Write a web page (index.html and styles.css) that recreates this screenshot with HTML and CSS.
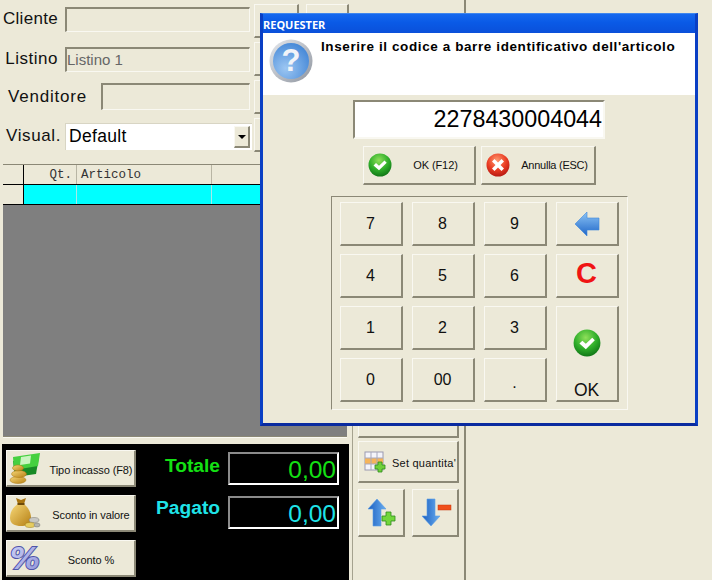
FILE: index.html
```html
<!DOCTYPE html>
<html lang="en">
<head>
    <meta charset="UTF-8">
    <title>Cassa</title>
    <link rel="stylesheet" href="styles.css">
</head>
<body>

    <!-- shared gradients and icons -->
    <svg class="defs" width="0" height="0" aria-hidden="true">
        <defs>
            <radialGradient id="gGreen" cx="45%" cy="30%" r="75%">
                <stop offset="0" stop-color="#8fe05a"/>
                <stop offset="0.55" stop-color="#2fae2a"/>
                <stop offset="1" stop-color="#0c6e14"/>
            </radialGradient>
            <radialGradient id="gRed" cx="45%" cy="30%" r="75%">
                <stop offset="0" stop-color="#ff9a70"/>
                <stop offset="0.55" stop-color="#ea3d24"/>
                <stop offset="1" stop-color="#b01410"/>
            </radialGradient>
            <radialGradient id="gHelp" cx="35%" cy="70%" r="85%">
                <stop offset="0" stop-color="#9cc6f2"/>
                <stop offset="1" stop-color="#3a80d4"/>
            </radialGradient>
            <linearGradient id="gRing" x1="0" y1="0" x2="1" y2="1">
                <stop offset="0" stop-color="#e6e9ee"/>
                <stop offset="1" stop-color="#8f959f"/>
            </linearGradient>
            <linearGradient id="gBlueH" x1="0" y1="0" x2="1" y2="0">
                <stop offset="0" stop-color="#1c5fc0"/>
                <stop offset="1" stop-color="#69aef0"/>
            </linearGradient>
            <linearGradient id="gBlueV" x1="0" y1="0" x2="0" y2="1">
                <stop offset="0" stop-color="#8cc4f5"/>
                <stop offset="1" stop-color="#1f66c8"/>
            </linearGradient>
            <linearGradient id="gGold" x1="0" y1="0" x2="1" y2="1">
                <stop offset="0" stop-color="#f7d878"/>
                <stop offset="1" stop-color="#b57f14"/>
            </linearGradient>
            <linearGradient id="gPercent" x1="0" y1="0" x2="1" y2="1">
                <stop offset="0" stop-color="#d0d3f6"/>
                <stop offset="1" stop-color="#8c92d8"/>
            </linearGradient>
            <symbol id="iconCheck" viewBox="0 0 24 24">
                <circle cx="12" cy="12" r="11.5" fill="url(#gGreen)"/>
                <path d="M5.5 12.5l2.5-2.4 3 2.6 5.500-5.200 2.200 2.200-7.700 7.600z" fill="#fff"/>
            </symbol>
        </defs>
    </svg>

    <div class="app">
        <div class="main">
            <div class="filters">
                <div class="fields">
                    <div class="row row--cliente">
                        <span class="row__label">Cliente</span>
                        <div class="field"></div>
                    </div>
                    <div class="row row--listino">
                        <span class="row__label row__label--listino">Listino</span>
                        <div class="field field--muted">Listino 1</div>
                    </div>
                    <div class="row row--venditore">
                        <span class="row__label row__label--wide">Venditore</span>
                        <div class="field"></div>
                    </div>
                    <div class="row row--visual">
                        <span class="row__label row__label--visual">Visual.</span>
                        <div class="combo">
                            <span class="combo__text">Default</span>
                            <span class="combo__arrow"></span>
                        </div>
                    </div>
                </div>
                <div class="quick">
                    <div class="btn"></div><div class="btn"></div>
                    <div class="btn"></div><div class="btn"></div>
                    <div class="btn"></div><div class="btn"></div>
                    <div class="btn"></div><div class="btn"></div>
                </div>
            </div>

            <div class="sheet">
                <div class="sheet__row sheet__row--head">
                    <div class="sheet__fixed"></div>
                    <div class="sheet__cell sheet__cell--qty">Qt.</div>
                    <div class="sheet__cell">Articolo</div>
                    <div class="sheet__cell"></div>
                </div>
                <div class="sheet__row sheet__row--current">
                    <div class="sheet__fixed"></div>
                    <div class="sheet__cell"></div>
                    <div class="sheet__cell"></div>
                    <div class="sheet__cell"></div>
                </div>
            </div>

            <div class="totals">
                <div class="totals__actions">
                    <div class="btn btn--action">
                        <svg class="icon-30" viewBox="0 0 30 30">
                            <path d="M3 8L29 4l-3 17-21 3z" fill="#178a26"/>
                            <path d="M3 4l27-4-2 13-24 4z" fill="#45d040"/>
                            <path d="M11 4l10-1.500-1 8-10 1.500z" fill="#c9f5c0"/>
                            <ellipse cx="8" cy="27" rx="8" ry="3.500" fill="url(#gGold)" stroke="#a87610" stroke-width=".5"/>
                            <ellipse cx="9" cy="21" rx="7.500" ry="3.500" fill="url(#gGold)" stroke="#a87610" stroke-width=".5"/>
                            <ellipse cx="8" cy="15" rx="5.500" ry="3" fill="url(#gGold)" stroke="#a87610" stroke-width=".5"/>
                        </svg>
                        <span class="btn__label">Tipo incasso (F8)</span>
                    </div>
                    <div class="btn btn--action">
                        <svg class="icon-30" viewBox="0 0 30 30">
                            <path d="M6 0l5 2 5-2-2 6H8z" fill="#a87410"/>
                            <path d="M8 6h6c5 4 7 9 7 14 0 6-4 8-10 8S0 26 0 20C0 14 3 9 8 6z" fill="url(#gGold)"/>
                            <rect x="7.500" y="5" width="7" height="2" fill="#6e4a08"/>
                            <ellipse cx="24" cy="22" rx="5" ry="2.500" fill="#c8c8c4" stroke="#77776e" stroke-width=".5"/>
                            <ellipse cx="20" cy="27" rx="5" ry="2.500" fill="#e6cc60" stroke="#9a7a14" stroke-width=".5"/>
                            <ellipse cx="27" cy="27" rx="3" ry="2" fill="#b4b4ae" stroke="#77776e" stroke-width=".5"/>
                        </svg>
                        <span class="btn__label">Sconto in valore</span>
                    </div>
                    <div class="btn btn--action">
                        <svg class="icon-30" viewBox="0 0 30 30">
                            <text class="percent-glyph" x="0" y="26">%</text>
                        </svg>
                        <span class="btn__label">Sconto %</span>
                    </div>
                </div>
                <div class="totals__values">
                    <div class="amount amount--total">
                        <span class="amount__label">Totale</span>
                        <div class="amount__box">0,00</div>
                    </div>
                    <div class="amount amount--paid">
                        <span class="amount__label">Pagato</span>
                        <div class="amount__box">0,00</div>
                    </div>
                </div>
            </div>
        </div>

        <div class="side">
            <div class="side__stack">
                <div class="btn btn--tall"><span class="side__peek"></span></div>
                <div class="btn btn--qty">
                    <svg class="icon-22" viewBox="0 0 22 22">
                        <rect x="1" y="1" width="18" height="18" fill="#f4f4fa" stroke="#9a9ab0"/>
                        <rect x="1" y="7" width="18" height="6" fill="#f5b45a"/>
                        <path d="M7 1v18M13 1v18M1 7h18M1 13h18" stroke="#a8a8bc" fill="none"/>
                        <path d="M14 11h4v3h3v4h-3v3h-4v-3h-3v-4h3z" fill="#6fd03a" stroke="#2f8a1c" stroke-width=".8"/>
                    </svg>
                    <span class="btn__label btn__label--qty">Set quantita'</span>
                </div>
                <div class="side__arrows">
                    <div class="btn btn--arrow">
                        <svg class="icon-30" viewBox="0 0 30 30">
                            <path d="M10 1l9 10h-5v17H6V11H1z" fill="url(#gBlueH)" stroke="#5a9ee6" stroke-width=".6"/>
                            <path d="M19 14h5v4h4v5h-4v4h-5v-4h-4v-5h4z" fill="#72d63c" stroke="#2f8a1c" stroke-width=".8"/>
                        </svg>
                    </div>
                    <div class="btn btn--arrow">
                        <svg class="icon-30" viewBox="0 0 30 30">
                            <path d="M6 1h8v17h5l-9 10-9-10h5z" fill="url(#gBlueH)" stroke="#5a9ee6" stroke-width=".6"/>
                            <rect x="17" y="7" width="13" height="5" fill="#f0501c" stroke="#c8380c" stroke-width=".5"/>
                        </svg>
                    </div>
                </div>
            </div>
        </div>
    </div>

    <div class="dialog">
        <div class="dialog__title">REQUESTER</div>
        <div class="dialog__head">
            <svg class="dialog__help" viewBox="0 0 44 44">
                <circle cx="22" cy="22" r="21.500" fill="url(#gRing)"/>
                <circle cx="22" cy="22" r="18" fill="url(#gHelp)"/>
                <text class="help-glyph" x="22" y="32">?</text>
            </svg>
            <p class="dialog__text">Inserire il codice a barre identificativo dell'articolo</p>
        </div>
        <div class="dialog__body">
            <div class="barcode">2278430004044</div>
            <div class="dialog__actions">
                <div class="btn btn--ok">
                    <svg class="icon-24"><use href="#iconCheck"/></svg>
                    <span class="btn__label">OK (F12)</span>
                </div>
                <div class="btn btn--cancel">
                    <svg class="icon-24" viewBox="0 0 24 24">
                        <circle cx="12" cy="12" r="11.500" fill="url(#gRed)"/>
                        <path d="M6 8.500L8.500 6 12 9.500 15.500 6 18 8.500 14.500 12 18 15.500 15.500 18 12 14.500 8.500 18 6 15.500 9.500 12z" fill="#fff"/>
                    </svg>
                    <span class="btn__label">Annulla (ESC)</span>
                </div>
            </div>
            <div class="keypad">
                <div class="btn key">7</div>
                <div class="btn key">8</div>
                <div class="btn key">9</div>
                <div class="btn key">
                    <svg class="icon-back" viewBox="0 0 26 26">
                        <path d="M13 1v6h12v12H13v6L1 13z" fill="url(#gBlueV)" stroke="#3d86dc" stroke-width=".6"/>
                    </svg>
                </div>
                <div class="btn key">4</div>
                <div class="btn key">5</div>
                <div class="btn key">6</div>
                <div class="btn key key--clear">C</div>
                <div class="btn key">1</div>
                <div class="btn key">2</div>
                <div class="btn key">3</div>
                <div class="btn key key--enter">
                    <svg class="icon-28"><use href="#iconCheck"/></svg>
                    <span>OK</span>
                </div>
                <div class="btn key">0</div>
                <div class="btn key">00</div>
                <div class="btn key key--dot">.</div>
            </div>
        </div>
    </div>

</body>
</html>
```

FILE: styles.css
```css
* {
    margin: 0;
    padding: 0;
    box-sizing: border-box;
}

html, body {
    width: 712px;
    height: 580px;
    overflow: hidden;
}

body {
    position: relative;
    background: #ece9d8;
    font-family: "Liberation Sans", Arial, sans-serif;
    color: #000;
}

.defs {
    position: absolute;
}

.app {
    display: flex;
    height: 580px;
}

/* raised button used everywhere */
.btn {
    display: flex;
    align-items: center;
    background: #ece9d8;
    border-style: solid;
    border-width: 1px 2px 2px 1px;
    border-color: #f9f8f1 #8b8876 #8b8876 #f9f8f1;
    font-size: 11px;
    letter-spacing: -.1px;
    color: #111;
}

.btn__label {
    flex: 1;
    text-align: center;
    white-space: nowrap;
}

.icon-22 { width: 22px; height: 22px; flex: none; }
.icon-24 { width: 24px; height: 24px; flex: none; }
.icon-28 { width: 28px; height: 28px; flex: none; }
.icon-30 { width: 30px; height: 30px; flex: none; overflow: visible; }
.icon-back { width: 26px; height: 26px; }

/* left column */
.main {
    width: 352px;
    display: flex;
    flex-direction: column;
}

.filters {
    display: flex;
    height: 164px;
}

.fields {
    width: 254px;
    padding-right: 4px;
}

.row {
    display: flex;
    align-items: center;
}

.row--cliente { height: 25px; margin-top: 7px; }
.row--listino { height: 25px; margin-top: 15px; }
.row--venditore { height: 27px; margin-top: 11px; }
.row--visual { height: 27px; margin-top: 13px; margin-right: -2px; }

.row__label {
    flex: none;
    width: 58px;
    margin-right: 7px;
    padding-bottom: 2px;
    text-align: right;
    font-size: 17px;
    letter-spacing: .3px;
    color: #111;
    white-space: nowrap;
}

.row__label--listino {
    letter-spacing: .5px;
}

.row__label--wide {
    width: 87px;
    margin-right: 14px;
    padding-bottom: 0;
    letter-spacing: .8px;
}

.row__label--visual {
    width: 61px;
    margin-right: 4px;
    letter-spacing: .6px;
}

.field {
    flex: 1;
    height: 100%;
    border-style: solid;
    border-width: 2px 1px 1px 2px;
    border-color: #8b8876 #f9f8f1 #f9f8f1 #8b8876;
    font-size: 15px;
    line-height: 21px;
}

.field--muted {
    color: #666;
}

.combo {
    flex: none;
    width: 187px;
    height: 100%;
    display: flex;
    align-items: center;
    justify-content: space-between;
    padding: 2px 2px 2px 3px;
    background: #fff;
    border-top: 1px solid #d8d5c4;
    border-left: 1px solid #d8d5c4;
}

.combo__text {
    font-size: 17.5px;
    letter-spacing: .3px;
    padding-bottom: 2px;
}

.combo__arrow {
    position: relative;
    width: 16px;
    height: 22px;
    background: #ece9d8;
    border-style: solid;
    border-width: 1px 2px 2px 1px;
    border-color: #f9f8f1 #8b8876 #8b8876 #f9f8f1;
}

.combo__arrow::after {
    content: "";
    position: absolute;
    left: 3px;
    top: 8px;
    border-style: solid;
    border-width: 4px 4px 0;
    border-color: #000 transparent transparent;
}

.quick {
    display: grid;
    grid-template-columns: 45px 43px;
    grid-auto-rows: 34px;
    column-gap: 7px;
    row-gap: 4px;
    padding-top: 4px;
}

/* article sheet */
.sheet {
    flex: 1;
    margin: 0 5px 0 3px;
    background: #7f7f7f;
    border-top: 1px solid #8b8876;
    border-bottom: 1px solid #8b8876;
    box-shadow: 0 1px 0 #f9f8f1;
}

.sheet__row {
    display: grid;
    grid-template-columns: 21px 53px 135px 1fr;
    border-bottom: 1px solid #000;
    font-family: "Liberation Mono", "Courier New", monospace;
    font-size: 12.5px;
}

.sheet__row--head {
    height: 20px;
    background: #ece9d8;
}

.sheet__row--current {
    height: 20px;
    background: #00ffff;
}

.sheet__fixed {
    background: #ece9d8;
    border-right: 1px solid #000;
}

.sheet__cell {
    padding: 3px 0 0 4px;
    border-right: 1px solid #b8b5a4;
    color: #333;
}

.sheet__cell--qty {
    text-align: right;
    padding-right: 4px;
}

.sheet__row--current .sheet__cell {
    border-right-color: #a8e8e8;
}

/* black totals panel */
.totals {
    display: flex;
    height: 136px;
    margin: 7px 3px 0 2px;
    padding: 6px 0 0 4px;
    background: #000;
}

.totals__actions {
    width: 130px;
    display: flex;
    flex-direction: column;
    gap: 8px;
}

.btn--action {
    height: 37px;
    padding-left: 3px;
}

.btn--action .btn__label {
    margin-left: 8px;
    padding-top: 3px;
}

.totals__values {
    margin-left: 92px;
    margin-top: 2px;
    width: 111px;
}

.amount {
    position: relative;
    display: flex;
    justify-content: flex-end;
}

.amount--paid {
    margin-top: 11px;
}

.amount__label {
    position: absolute;
    right: 119px;
    font-size: 19.2px;
    font-weight: bold;
    white-space: nowrap;
}

.amount--total { color: #14e014; }
.amount--total .amount__label { top: 3px; }
.amount--paid { color: #1fe3e8; }
.amount--paid .amount__label { top: 1px; }

.amount__box {
    width: 111px;
    height: 33px;
    padding-right: 1px;
    border-style: solid;
    border-width: 2px;
    border-color: #8b8b8b #fff #fff #8b8b8b;
    text-align: right;
    font-size: 24.5px;
    line-height: 32px;
}

/* right tool column */
.side {
    width: 114px;
    display: flex;
    align-items: flex-end;
    border-right: 2px solid #8b8876;
}

.side__stack {
    width: 100%;
    height: 185px;
    padding: 0 5px 42px 5px;
    border-left: 1px solid #a5a28f;
    display: flex;
    flex-direction: column;
}

.btn--tall {
    height: 43px;
    justify-content: center;
    align-items: flex-end;
    padding-bottom: 11px;
}

.side__peek {
    width: 9px;
    height: 2px;
    margin-right: 46px;
    background: #3d3d6a;
}

.btn--qty {
    height: 42px;
    margin-top: 3px;
    padding-left: 5px;
}

.btn__label--qty {
    padding: 3px 1px 0 0;
    text-align: right;
    letter-spacing: .25px;
}

.side__arrows {
    display: flex;
    justify-content: space-between;
    margin-top: 6px;
}

.btn--arrow {
    width: 47px;
    height: 48px;
    padding-left: 8px;
}

/* requester window */
.dialog {
    position: absolute;
    left: 260px;
    top: 13px;
    width: 438px;
    height: 413px;
    display: flex;
    flex-direction: column;
    background: #ece9d8;
    border-style: solid;
    border-width: 1px 3px 3px;
    border-color: #3f86ee #0a3fc4 #0a2ba0;
}

.dialog__title {
    height: 19px;
    background: linear-gradient(#1668ee, #0a5ae6 45%, #0a50da);
    color: #fff;
    font-family: "Noto Sans", sans-serif;
    font-size: 11px;
    font-weight: bold;
    line-height: 21px;
}

.dialog__head {
    height: 62px;
    display: flex;
    padding: 6px 0 0 6px;
    background: #fff;
}

.dialog__help {
    flex: none;
    width: 44px;
    height: 44px;
}

.help-glyph {
    font-family: "Liberation Sans", sans-serif;
    font-size: 31px;
    font-weight: bold;
    fill: #f2f4f8;
    text-anchor: middle;
}

.percent-glyph {
    font-family: "DejaVu Sans", sans-serif;
    font-size: 30px;
    font-weight: bold;
    font-style: italic;
    fill: url(#gPercent);
    stroke: #4f54a8;
    stroke-width: 2px;
    paint-order: stroke fill;
}

.dialog__text {
    margin-left: 8px;
    font-size: 13.5px;
    font-weight: bold;
    letter-spacing: .6px;
    white-space: nowrap;
}

.dialog__body {
    flex: 1;
    display: flex;
    flex-direction: column;
    align-items: center;
    padding-top: 5px;
}

.barcode {
    width: 252px;
    height: 39px;
    padding-right: 1px;
    background: #fff;
    border-style: solid;
    border-width: 2px;
    border-color: #8b8876 #f9f8f1 #f9f8f1 #8b8876;
    text-align: right;
    font-size: 23.3px;
    line-height: 34px;
}

.dialog__actions {
    display: flex;
    gap: 5px;
    margin-top: 7px;
}

.btn--ok,
.btn--cancel {
    height: 39px;
    padding-left: 4px;
}

.btn--ok { width: 113px; }
.btn--cancel { width: 115px; letter-spacing: -.25px; }

.btn--ok .btn__label { margin-left: 6px; }
.btn--cancel .btn__label { margin-left: 6px; }

.keypad {
    display: grid;
    grid-template-columns: repeat(4, 63px);
    grid-auto-rows: 44px;
    gap: 8px 9px;
    width: 297px;
    height: 214px;
    margin-top: 11px;
    padding: 5px 8px 0;
    border-style: solid;
    border-width: 1px;
    border-color: #8b8876 #f9f8f1 #f9f8f1 #8b8876;
}

.key {
    justify-content: center;
    padding-top: 1px;
    font-size: 16px;
}

.key--dot {
    padding-top: 6px;
}

.key--clear {
    padding: 0 0 4px;
    color: #f01414;
    font-size: 29px;
    font-weight: bold;
}

.key--enter {
    grid-column: 4;
    grid-row: 3 / span 2;
    flex-direction: column;
    justify-content: flex-start;
    padding-top: 22px;
    font-size: 17.5px;
}

.key--enter span {
    margin-top: 23px;
}
```
